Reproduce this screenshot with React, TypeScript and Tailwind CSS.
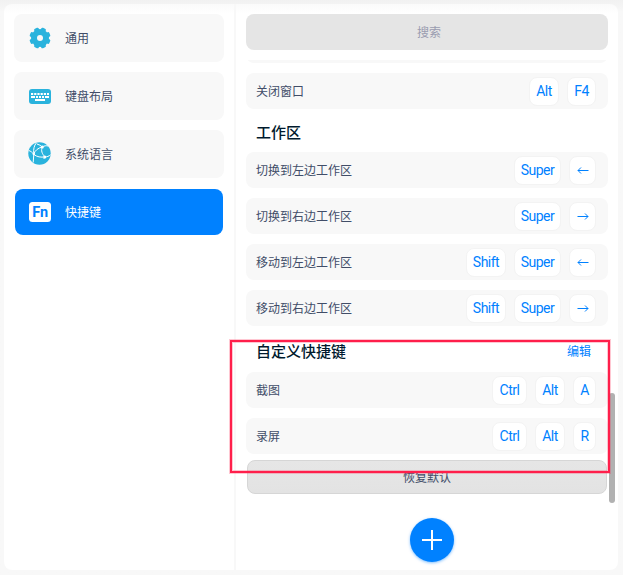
import type { ReactNode } from "react";

type Shortcut = { label: string; keys: string[] };

const workspaceShortcuts: Shortcut[] = [
  { label: "切换到左边工作区", keys: ["Super", "←"] },
  { label: "切换到右边工作区", keys: ["Super", "→"] },
  { label: "移动到左边工作区", keys: ["Shift", "Super", "←"] },
  { label: "移动到右边工作区", keys: ["Shift", "Super", "→"] },
];

const customShortcuts: Shortcut[] = [
  { label: "截图", keys: ["Ctrl", "Alt", "A"] },
  { label: "录屏", keys: ["Ctrl", "Alt", "R"] },
];

const keyWidths: Record<string, string> = {
  Super: "w-[47px]",
  Shift: "w-10",
  Ctrl: "w-[35px]",
  Alt: "w-[30px]",
  F4: "w-[29px]",
  "←": "w-[27px]",
  "→": "w-[27px]",
  A: "w-[23px]",
  R: "w-[23px]",
};

const gearTeeth = [22.5, 67.5, 112.5, 157.5, 202.5, 247.5, 292.5, 337.5];

function GearIcon() {
  return (
    <svg width="24" height="24" viewBox="0 0 24 24" fill="#2ab3dd">
      <circle cx="12" cy="12" r="9" />
      {gearTeeth.map((angle) => (
        <rect
          key={angle}
          x="9.5"
          y="1.4"
          width="5"
          height="6"
          rx="1.4"
          transform={`rotate(${angle} 12 12)`}
        />
      ))}
      <circle cx="12" cy="12" r="3" fill="#f8f8f8" />
    </svg>
  );
}

function KeyboardIcon() {
  return (
    <svg width="24" height="24" viewBox="0 0 24 24">
      <rect x="1" y="5" width="22" height="15" rx="3" fill="#2ab3dd" />
      <path
        d="M3 10H21"
        stroke="#fff"
        strokeWidth="2"
        strokeDasharray="2.2 1"
      />
      <path
        d="M3 13H7M8 13H10M11 13H13M14 13H16M17 13H21"
        stroke="#fff"
        strokeWidth="2"
      />
      <path d="M7 16H17" stroke="#fff" strokeWidth="2" />
    </svg>
  );
}

function GlobeIcon() {
  return (
    <svg width="24" height="24" viewBox="0 0 24 24">
      <circle cx="11.5" cy="11.5" r="11.2" fill="#2ab3dd" />
      <g stroke="#fff" strokeWidth="1" fill="none">
        <path d="M0.8 8.5C2.5 9 4.5 10.5 5.8 12.2L5.2 20.5" />
        <path d="M5.8 12C7 8.5 10 6 14.3 5M5.8 12C5.2 7.5 6 3.5 8.5 0.8" />
        <path d="M9 2C11 2.6 13 3.6 14.3 5C16 3.8 18.5 3.4 20 4" />
        <path d="M14.3 5C12.8 8.5 14 12 17 14.8C19 15 21 14.2 22.5 12.8" />
        <path d="M5.8 12.4C9 15 13 15.6 17 14.8L15.8 16.8" />
      </g>
      <g fill="#fff">
        <circle cx="5.8" cy="12.1" r="1.2" />
        <circle cx="14.3" cy="5.1" r="1.5" />
        <circle cx="16.8" cy="14.9" r="1.5" />
      </g>
    </svg>
  );
}

function FnIcon() {
  return (
    <svg width="24" height="24" viewBox="0 0 24 24">
      <rect x="1" y="2" width="22" height="20" rx="3.5" fill="#fff" />
      <text
        x="4.2"
        y="17"
        fontSize="14"
        fill="#0081ff"
        textLength="16"
        lengthAdjust="spacingAndGlyphs"
        className="font-['Roboto',sans-serif] font-bold"
      >
        Fn
      </text>
    </svg>
  );
}

function NavItem({ icon, label }: { icon: ReactNode; label: string }) {
  return (
    <li className="flex h-12 items-center rounded-lg bg-[#f8f8f8] pl-3.5 text-[#414d68]">
      {icon}
      <span className="ml-[13px]">{label}</span>
    </li>
  );
}

function ShortcutRow({ label, keys }: Shortcut) {
  return (
    <li className="flex h-9 items-center justify-between rounded-lg bg-[#f8f8f8] pl-2.5 pr-[11px]">
      <span>{label}</span>
      <div className="flex gap-2">
        {keys.map((key) => (
          <kbd
            key={key}
            className={`-ml-px mr-px flex h-[29px] items-center justify-center rounded-lg border border-[#f3f3f3] bg-white font-['Roboto',sans-serif] text-sm leading-none tracking-[-0.5px] text-[#0081ff] ${keyWidths[key]}`}
          >
            {key === "←" || key === "→" ? (
              <svg
                width="12"
                height="9"
                viewBox="0 0 12 9"
                fill="none"
                stroke="currentColor"
                className={key === "→" ? "-scale-x-100" : ""}
              >
                <path d="M11.5 4.5H1M4 1.5L1 4.5L4 7.5" />
              </svg>
            ) : (
              key
            )}
          </kbd>
        ))}
      </div>
    </li>
  );
}

export default function App() {
  return (
    <main className="relative h-[575px] w-[623px] overflow-hidden bg-gradient-to-b from-[#f1f1f1] to-[#f8f8f8] to-[12px] px-1 pt-1 font-['Noto_Sans_CJK_SC',sans-serif] text-xs text-[#414d68]">
      <div className="flex h-[566px] w-[614px] overflow-hidden rounded-lg bg-gradient-to-b from-[#fafafa] to-white to-[10px]">
        <nav className="w-[232px] border-r-2 border-[#f8f8f8] p-2.5">
          <ul className="flex flex-col gap-2.5">
            <NavItem icon={<GearIcon />} label="通用" />
            <NavItem icon={<KeyboardIcon />} label="键盘布局" />
            <NavItem icon={<GlobeIcon />} label="系统语言" />
            <li className="mx-px mt-px flex h-[46px] items-center rounded-lg bg-[#0081ff] pl-[13px] text-white">
              <FnIcon />
              <span className="ml-[13px]">快捷键</span>
            </li>
          </ul>
        </nav>

        <section className="w-[382px] p-2.5">
          <div className="flex h-9 items-center justify-center rounded-lg bg-[#e5e5e5] text-[#9a9cb0]">
            <span className="ml-1">搜索</span>
          </div>

          {/* tail of the row scrolled under the search box */}
          <div className="mt-2.5 flex h-[3px] items-end overflow-hidden">
            <div className="h-9 w-full shrink-0 rounded-lg bg-[#f8f8f8]" />
          </div>

          <ul className="mt-2.5">
            <ShortcutRow label="关闭窗口" keys={["Alt", "F4"]} />
          </ul>

          <h2 className="flex h-[43px] items-center pb-px pl-2.5 pt-1 text-[15px] font-medium text-[#001a2e]">
            工作区
          </h2>
          <ul className="flex flex-col gap-2.5">
            {workspaceShortcuts.map((item) => (
              <ShortcutRow key={item.label} {...item} />
            ))}
          </ul>

          <div className="flex h-[46px] items-center justify-between pl-2.5 pr-[17px] pt-1">
            <h2 className="text-[15px] font-medium text-[#001a2e]">
              自定义快捷键
            </h2>
            <button className="text-[#0081ff]">编辑</button>
          </div>
          <ul className="flex flex-col gap-2.5">
            {customShortcuts.map((item) => (
              <ShortcutRow key={item.label} {...item} />
            ))}
          </ul>

          <button className="mx-px mt-1.5 flex h-[34px] w-[360px] items-center justify-center rounded-lg border border-[#d6d6d6] bg-gradient-to-b from-[#e6e6e6] to-[#e3e3e3]">
            恢复默认
          </button>

          <div className="mt-6 flex justify-center pl-2.5">
            <button className="flex size-11 items-center justify-center rounded-full bg-[#0081ff] shadow-[0_1px_3px_rgba(0,129,255,0.5)]">
              <svg width="20" height="20" stroke="#fff" strokeWidth="2">
                <path d="M10 0V20M0 10H20" />
              </svg>
            </button>
          </div>
        </section>
      </div>

      <div className="absolute left-[609px] top-[393px] h-[110px] w-1.5 rounded-full bg-[#b1b1b1]" />
      {/* highlight around the custom shortcuts */}
      <div className="absolute left-[230px] top-[340px] h-[133px] w-[380px] border-2 border-[#ff1f4b] shadow-[0_0_0_1px_rgba(255,31,75,0.25),inset_0_0_0_1px_rgba(255,31,75,0.25)]" />
    </main>
  );
}
